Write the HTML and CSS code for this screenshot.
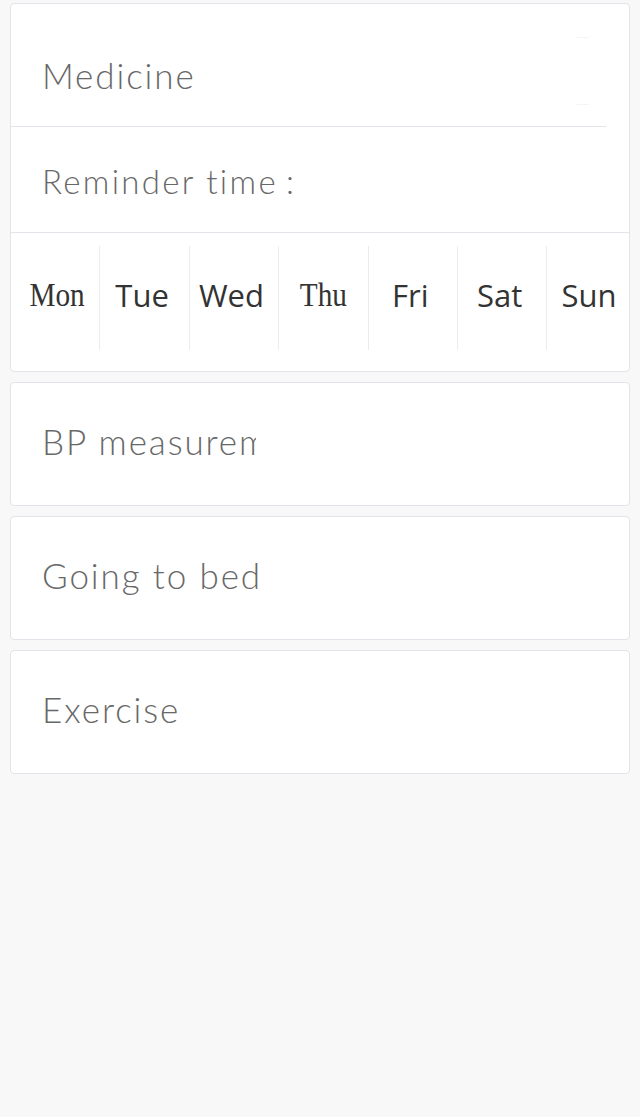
FILE: index.html
```html
<!DOCTYPE html>
<html lang="en">
<head>
<meta charset="utf-8">
<title>Reminders</title>
<link rel="stylesheet" href="styles.css">
</head>
<body>
<div class="page">
  <section class="card card-medicine">
    <div class="row-title">
      <span class="label">Medicine</span>
      <span class="ghost"></span>
    </div>
    <div class="row-time">
      <span class="label label-sm">Reminder time<span class="colon">:</span></span>
    </div>
    <div class="days">
      <div class="day serif"><span class="squeeze">Mon</span></div>
      <div class="day">Tue</div>
      <div class="day">Wed</div>
      <div class="day serif"><span class="squeeze">Thu</span></div>
      <div class="day">Fri</div>
      <div class="day">Sat</div>
      <div class="day">Sun</div>
    </div>
  </section>
  <section class="card card-simple">
    <div class="label clip">BP measurement</div>
  </section>
  <section class="card card-simple">
    <div class="label">Going to bed</div>
  </section>
  <section class="card card-simple">
    <div class="label">Exercise</div>
  </section>
</div>
</body>
</html>
```

FILE: styles.css
```css
* { box-sizing: border-box; }

html, body {
  margin: 0;
  background: #f8f8f8;
  font-family: Lato, "Open Sans", "Noto Sans CJK SC", sans-serif;
}

.page {
  padding: 3px 10px 0;
  display: flex;
  flex-direction: column;
  gap: 10px;
}

.card {
  background: #fff;
  border: 1px solid #e3e3ea;
  border-radius: 4px;
  overflow: hidden;
}

.label {
  color: #686868;
  font-weight: 300;
  font-size: 35px;
  line-height: 42px;
  letter-spacing: 1.9px;
  white-space: nowrap;
}

.label-sm {
  font-size: 33px;
  line-height: 40px;
  letter-spacing: 2.3px;
}

.colon {
  margin-left: 8px;
}

.row-title {
  height: 123px;
  margin-right: 23px;
  border-bottom: 1px solid #e3e3ea;
  display: flex;
  align-items: flex-start;
  padding-left: 31px;
}

.row-title .label {
  margin-top: 50px;
}

.ghost {
  margin-left: auto;
  margin-right: 17px;
  margin-top: 33px;
  width: 13px;
  height: 68px;
  border-top: 1px solid #f5f5f7;
  border-bottom: 1px solid #f5f5f7;
}

.row-time {
  height: 106px;
  border-bottom: 1px solid #e3e3ea;
  padding: 34px 0 0 31px;
}

.days {
  display: grid;
  grid-template-columns: repeat(7, 89.4px);
  margin-left: -1px;
  padding: 13px 0 21px;
  height: 138px;
}

.day {
  height: 104px;
  display: flex;
  align-items: center;
  justify-content: center;
  padding-right: 5px;
  padding-bottom: 6px;
  border-left: 1px solid #ececef;
  font-family: "Open Sans", Roboto, "Liberation Sans", sans-serif;
  font-size: 31px;
  color: #333;
}

.day:first-child {
  border-left: none;
  padding-left: 4px;
}

.day.serif {
  font-family: "Liberation Serif", "DejaVu Serif", serif;
  font-size: 34px;
  padding-right: 0;
  padding-bottom: 6px;
}

.squeeze {
  display: inline-block;
  transform: scaleX(0.86);
}

.card-simple {
  height: 124px;
  padding: 37px 0 0 31px;
}

.clip {
  width: 214px;
  overflow: hidden;
}
```
